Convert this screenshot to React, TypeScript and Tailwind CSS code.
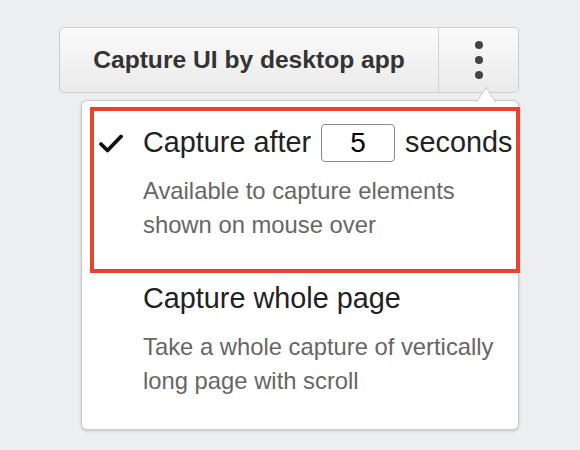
export default function App() {
  return (
    <div className="w-[580px] h-[450px] bg-[#eceeef] pt-[27px] pl-[59px] font-['Liberation_Sans',Arial,sans-serif]">
      {/* split button */}
      <div className="flex w-[460px] h-[66px] rounded-[5px] border border-[#cdcdcd] bg-gradient-to-b from-[#fbfbfb] to-[#eaeaea]">
        <div className="flex flex-1 items-center justify-center border-r border-[#d2d2d2] text-[24.6px] font-bold text-[#333]">
          Capture UI by desktop app
        </div>
        <div className="flex w-[79px] flex-col items-center justify-center gap-[7px]">
          <span className="block w-[8px] h-[8px] rounded-full bg-[#454545]" />
          <span className="block w-[8px] h-[8px] rounded-full bg-[#454545]" />
          <span className="block w-[8px] h-[8px] rounded-full bg-[#454545]" />
        </div>
      </div>

      {/* dropdown menu */}
      <div className="relative ml-[22px] mt-[7px] w-[438px] rounded-[6px] border border-[#c9c9c9] bg-white pt-[6px] pl-[8px] pb-[31px] shadow-[0_1px_3px_rgba(0,0,0,0.18)]">
        {/* caret */}
        <svg className="absolute -top-[15px] left-[394px]" width="20" height="16" viewBox="0 0 20 16">
          <polygon points="0,16 10,1 20,16" fill="#ffffff" />
          <path d="M0.5 16 L10 1.5 L19.5 16" fill="none" stroke="#c9c9c9" strokeWidth="1" />
        </svg>

        {/* item 1 (highlighted) */}
        <div className="w-[430px] border-[4px] border-[#e9432e] pl-[5px] pt-[13px] pb-[27px]">
          <div className="flex h-[38px] items-center">
            <svg className="mr-[20px]" width="24" height="19" viewBox="0 0 24 19">
              <path d="M2 10 L8.5 16.5 L22 2.5" fill="none" stroke="#111" strokeWidth="3.8" strokeLinecap="round" strokeLinejoin="round" />
            </svg>
            <span className="text-[28.8px] text-[#222] whitespace-nowrap">Capture after</span>
            <input
              readOnly
              value="5"
              className="mx-[10px] w-[74px] h-[38px] rounded-[4px] border-[1.5px] border-[#8a8a8a] bg-white text-center text-[28px] text-black outline-none"
            />
            <span className="text-[28.8px] text-[#222] whitespace-nowrap">seconds</span>
          </div>
          <div className="mt-[12px] pl-[44px] text-[23.8px] leading-[34px] text-[#666] whitespace-nowrap">
            Available to capture elements
            <br />
            shown on mouse over
          </div>
        </div>

        {/* item 2 */}
        <div className="mt-[7px] pl-[53px]">
          <div className="flex h-[38px] items-center text-[28.8px] text-[#222] whitespace-nowrap">Capture whole page</div>
          <div className="mt-[12px] text-[23.8px] leading-[34px] text-[#666] whitespace-nowrap">
            Take a whole capture of vertically
            <br />
            long page with scroll
          </div>
        </div>
      </div>
    </div>
  );
}
